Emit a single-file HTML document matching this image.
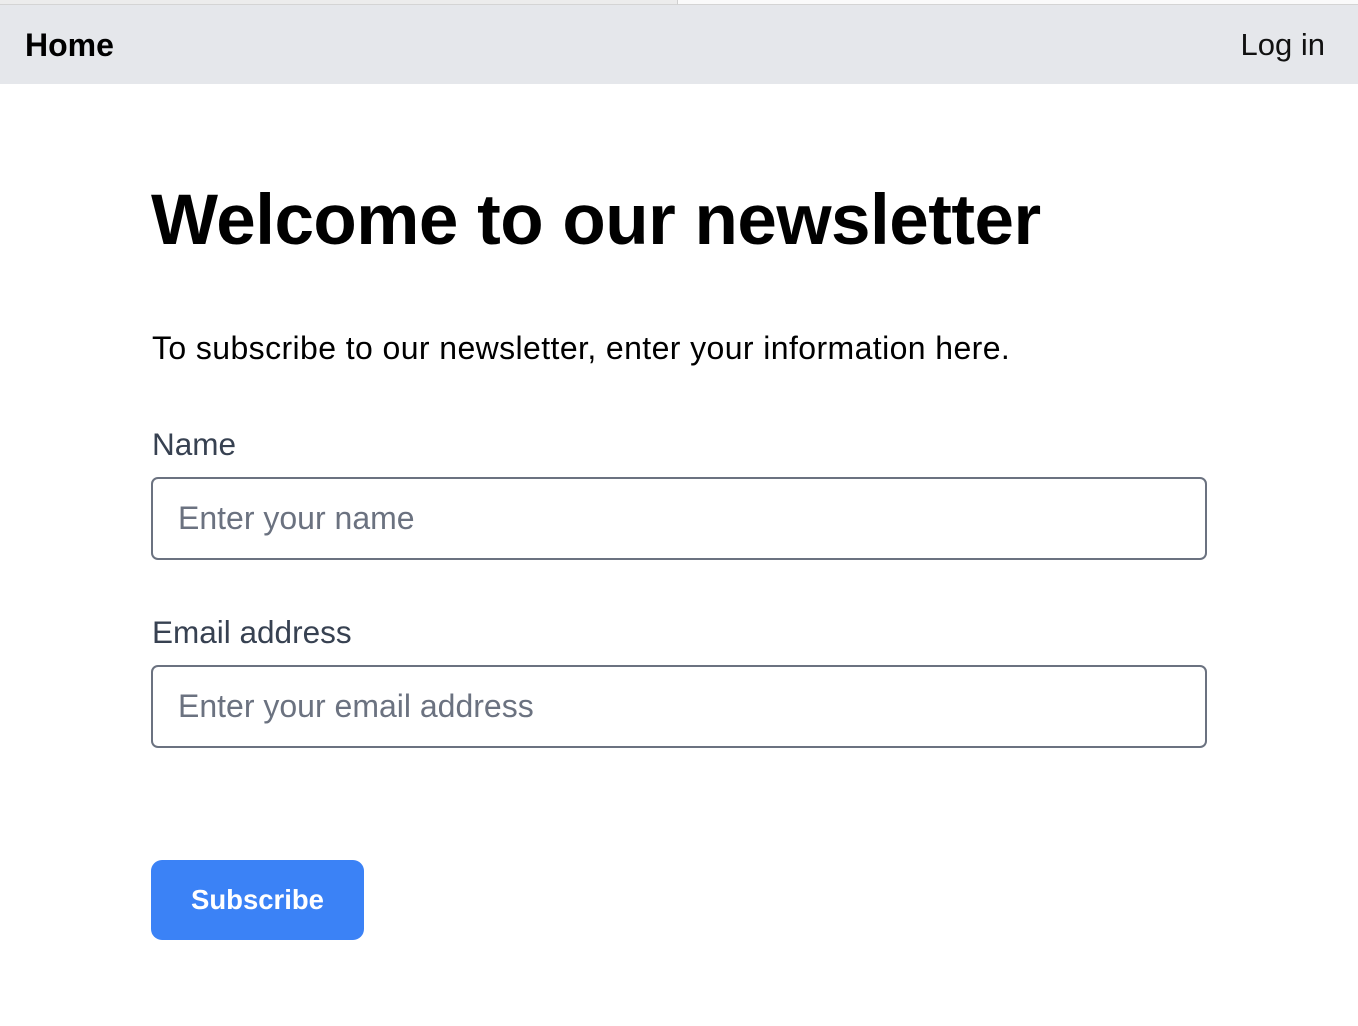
<!DOCTYPE html>
<html><head><style>
body{margin:0;width:1358px;height:1026px;background:#fff;font-family:"Liberation Sans",sans-serif;position:relative;overflow:hidden}
.strip{position:absolute;top:0;left:0;width:1358px;height:5px;background:#ececec;border-bottom:1px solid #d4d4d4;box-sizing:border-box}
.strip2{position:absolute;top:0;left:677px;width:681px;height:5px;background:#fafafa;border-bottom:1px solid #d4d4d4;border-left:1px solid #d0d0d0;box-sizing:border-box}
nav{position:absolute;top:5px;left:0;width:1358px;height:79px;background:#e5e7eb}
.home{position:absolute;left:25px;top:22px;font-size:32px;font-weight:bold;color:#000}
.login{position:absolute;right:33px;top:22px;font-size:31px;color:#111}
h1{position:absolute;left:151px;top:180px;margin:0;font-size:71px;font-weight:bold;letter-spacing:-0.5px;color:#000}
p{position:absolute;left:152px;top:330px;margin:0;font-size:32px;letter-spacing:0.4px;color:#000}
label{position:absolute;left:152px;font-size:31.5px;color:#374151}
.in{position:absolute;left:151px;width:1056px;height:83px;border:2px solid #6b7280;border-radius:7px;box-sizing:border-box;font-size:32px;color:#6b7280;padding-left:25px;line-height:79px}
.btn{position:absolute;left:151px;top:860px;width:213px;height:80px;background:#3b82f6;border-radius:11px;color:#fff;font-size:27.5px;font-weight:bold;text-align:center;line-height:80px}
</style></head><body>
<div class="strip"></div><div class="strip2"></div>
<nav><span class="home">Home</span><span class="login">Log in</span></nav>
<h1>Welcome to our newsletter</h1>
<p>To subscribe to our newsletter, enter your information here.</p>
<label style="top:426px">Name</label>
<div class="in" style="top:477px">Enter your name</div>
<label style="top:614px">Email address</label>
<div class="in" style="top:665px">Enter your email address</div>
<div class="btn">Subscribe</div>
</body></html>
